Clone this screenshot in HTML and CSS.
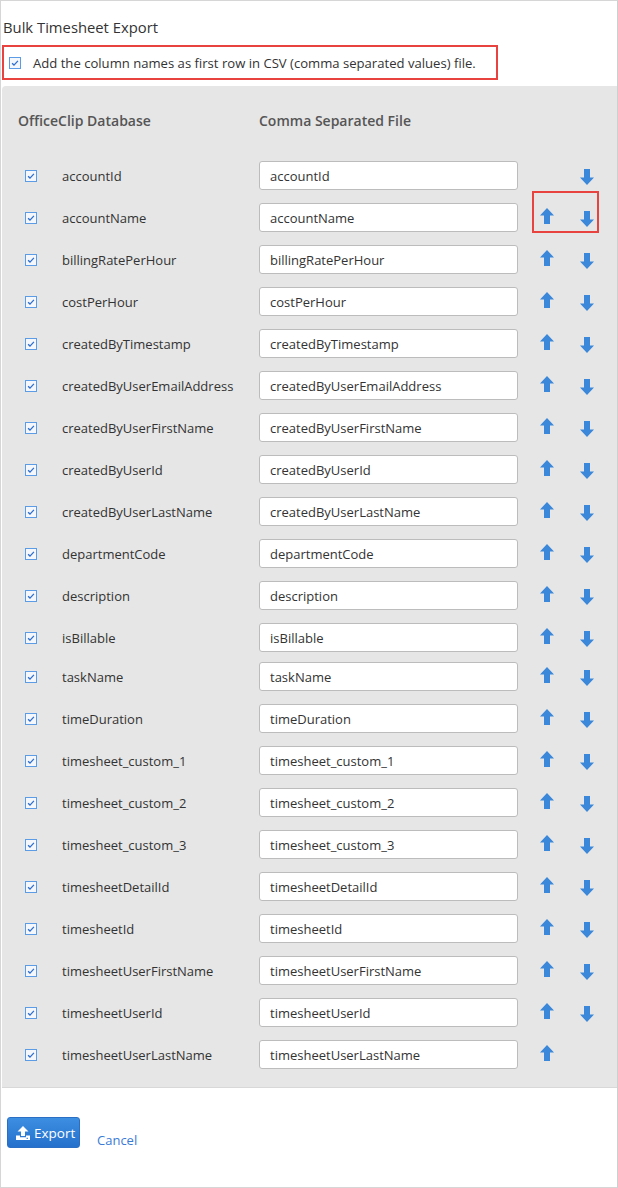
FILE: index.html
```html
<!DOCTYPE html>
<html lang="en">

<head>
    <meta charset="UTF-8">
    <meta name="viewport" content="width=device-width, initial-scale=1.0">
    <title>Bulk Timesheet Export</title>
    <link rel="stylesheet" href="styles.css">
</head>

<body>
    <div class="page">
        <h1 class="title">Bulk Timesheet Export</h1>
        <div class="header-option">
            <span class="check"><svg viewBox="0 0 12 12"><path d="M2.5 6.2l2.3 2.3 4.7-5" fill="none" stroke="#2f6fd0" stroke-width="1.6"/></svg></span>
            <span>Add the column names as first row in CSV (comma separated values) file.</span>
        </div>

        <div class="panel">
            <div class="panel-head">
                <span class="head-db">OfficeClip Database</span>
                <span class="head-csv">Comma Separated File</span>
            </div>
            <div id="rows"></div>
        </div>

        <div class="actions">
            <button class="export-btn">
                <svg class="export-icon" viewBox="0 0 14 14"><path d="M7 0l5.5 5.5H9v4.5H5V5.5H1.5z M0 9.5h4v1.8h6V9.5h4V14H0z" fill="#fff"/><rect x="10.5" y="11.8" width="1.5" height="1" fill="#2f7bd6"/></svg>
                Export
            </button>
            <a href="#" class="cancel-link">Cancel</a>
        </div>
    </div>

    <script>
        const fields = [
            "accountId", "accountName", "billingRatePerHour", "costPerHour", "createdByTimestamp",
            "createdByUserEmailAddress", "createdByUserFirstName", "createdByUserId", "createdByUserLastName",
            "departmentCode", "description", "isBillable", "taskName", "timeDuration",
            "timesheet_custom_1", "timesheet_custom_2", "timesheet_custom_3", "timesheetDetailId",
            "timesheetId", "timesheetUserFirstName", "timesheetUserId", "timesheetUserLastName"
        ];
        const checkSvg = '<svg viewBox="0 0 12 12"><path d="M2.5 6.2l2.3 2.3 4.7-5" fill="none" stroke="#2f6fd0" stroke-width="1.6"/></svg>';
        const upSvg = '<svg class="arrow up" viewBox="0 0 14 16"><path d="M7 0L14 7.5H10V16H4V7.5H0z"/></svg>';
        const downSvg = '<svg class="arrow down" viewBox="0 0 14 16"><path d="M4 0H10V8.5H14L7 16L0 8.5H4z"/></svg>';

        const rows = document.getElementById("rows");
        fields.forEach(function (name, i) {
            const row = document.createElement("div");
            row.className = "row" + (name === "taskName" ? " tight" : "");
            row.innerHTML =
                `<span class="check">${checkSvg}</span>` +
                `<span class="field-name">${name}</span>` +
                `<input class="field-input" type="text" value="${name}">` +
                `<span class="move">${i > 0 ? upSvg : ""}</span>` +
                `<span class="move">${i < fields.length - 1 ? downSvg : ""}</span>` +
                (i === 1 ? '<span class="highlight"></span>' : "");
            rows.appendChild(row);
        });
    </script>
</body>

</html>
```

FILE: styles.css
```css
* {
    margin: 0;
    padding: 0;
    box-sizing: border-box;
}

body {
    font-family: "Open Sans", Arial, sans-serif;
    color: #333;
    background-color: #fff;
}

.page {
    width: 618px;
    height: 1188px;
    border: 1px solid #d6d6d6;
    border-right-color: #cfcfcf;
}

.title {
    font-size: 14.8px;
    font-weight: normal;
    color: #333;
    padding: 16px 0 0 2px;
    height: 44px;
}

.header-option {
    display: inline-flex;
    align-items: center;
    gap: 12px;
    margin-left: 1px;
    width: 496px;
    height: 35px;
    padding: 1px 0 0 5px;
    border: 2px solid #e8433e;
    font-size: 13.1px;
}

.check {
    display: inline-flex;
    width: 12px;
    height: 12px;
    border: 1px solid #5c9be6;
    background-color: #f4f8fd;
}

.check svg {
    width: 10px;
    height: 10px;
}

.panel {
    margin: 6px 0 0 1px;
    background-color: #e6e6e6;
    border-top-left-radius: 4px;
    padding: 25px 0 12px 0;
    border-bottom: 1px solid #d8d8d8;
}

.panel-head {
    display: flex;
    height: 18px;
    font-size: 14px;
    font-weight: 600;
    color: #555;
    padding-left: 16px;
    align-items: center;
}

.head-db {
    width: 241px;
}

#rows {
    margin-top: 25px;
}

.row {
    position: relative;
    display: grid;
    grid-template-columns: 37px 197px 259px 58px 22px;
    align-items: center;
    height: 42px;
    padding-left: 23px;
    font-size: 13px;
}

.row.tight {
    margin-top: -3px;
}

.row .check {
    margin-top: 1px;
}

.field-name {
    color: #333;
    padding-top: 1px;
}

.field-input {
    height: 29px;
    border: 1px solid #bcbcbc;
    border-radius: 3px;
    background-color: #fff;
    padding: 1px 0 0 10px;
    font-family: inherit;
    font-size: 13px;
    color: #333;
    outline: none;
}

.move {
    display: flex;
    justify-content: center;
}

.arrow {
    width: 14px;
    height: 16px;
    fill: #3b87da;
}

.arrow.up {
    margin-top: -3px;
}

.arrow.down {
    margin-top: 4px;
}

.highlight {
    position: absolute;
    left: 530px;
    top: -5px;
    width: 67px;
    height: 42px;
    border: 2px solid #e8433e;
}

.actions {
    display: flex;
    align-items: flex-end;
    gap: 17px;
    padding: 29px 0 0 6px;
}

.export-btn {
    display: flex;
    align-items: center;
    gap: 4px;
    width: 73px;
    height: 31px;
    padding-left: 8px;
    border: 1px solid #2a6fc4;
    border-radius: 3px;
    background: linear-gradient(#3d8fe2, #2470cc);
    color: #fff;
    font-family: inherit;
    font-size: 13.5px;
}

.export-icon {
    width: 14px;
    height: 14px;
}

.cancel-link {
    color: #3a7bd6;
    font-size: 13px;
    text-decoration: none;
    margin-bottom: -1px;
}
```
